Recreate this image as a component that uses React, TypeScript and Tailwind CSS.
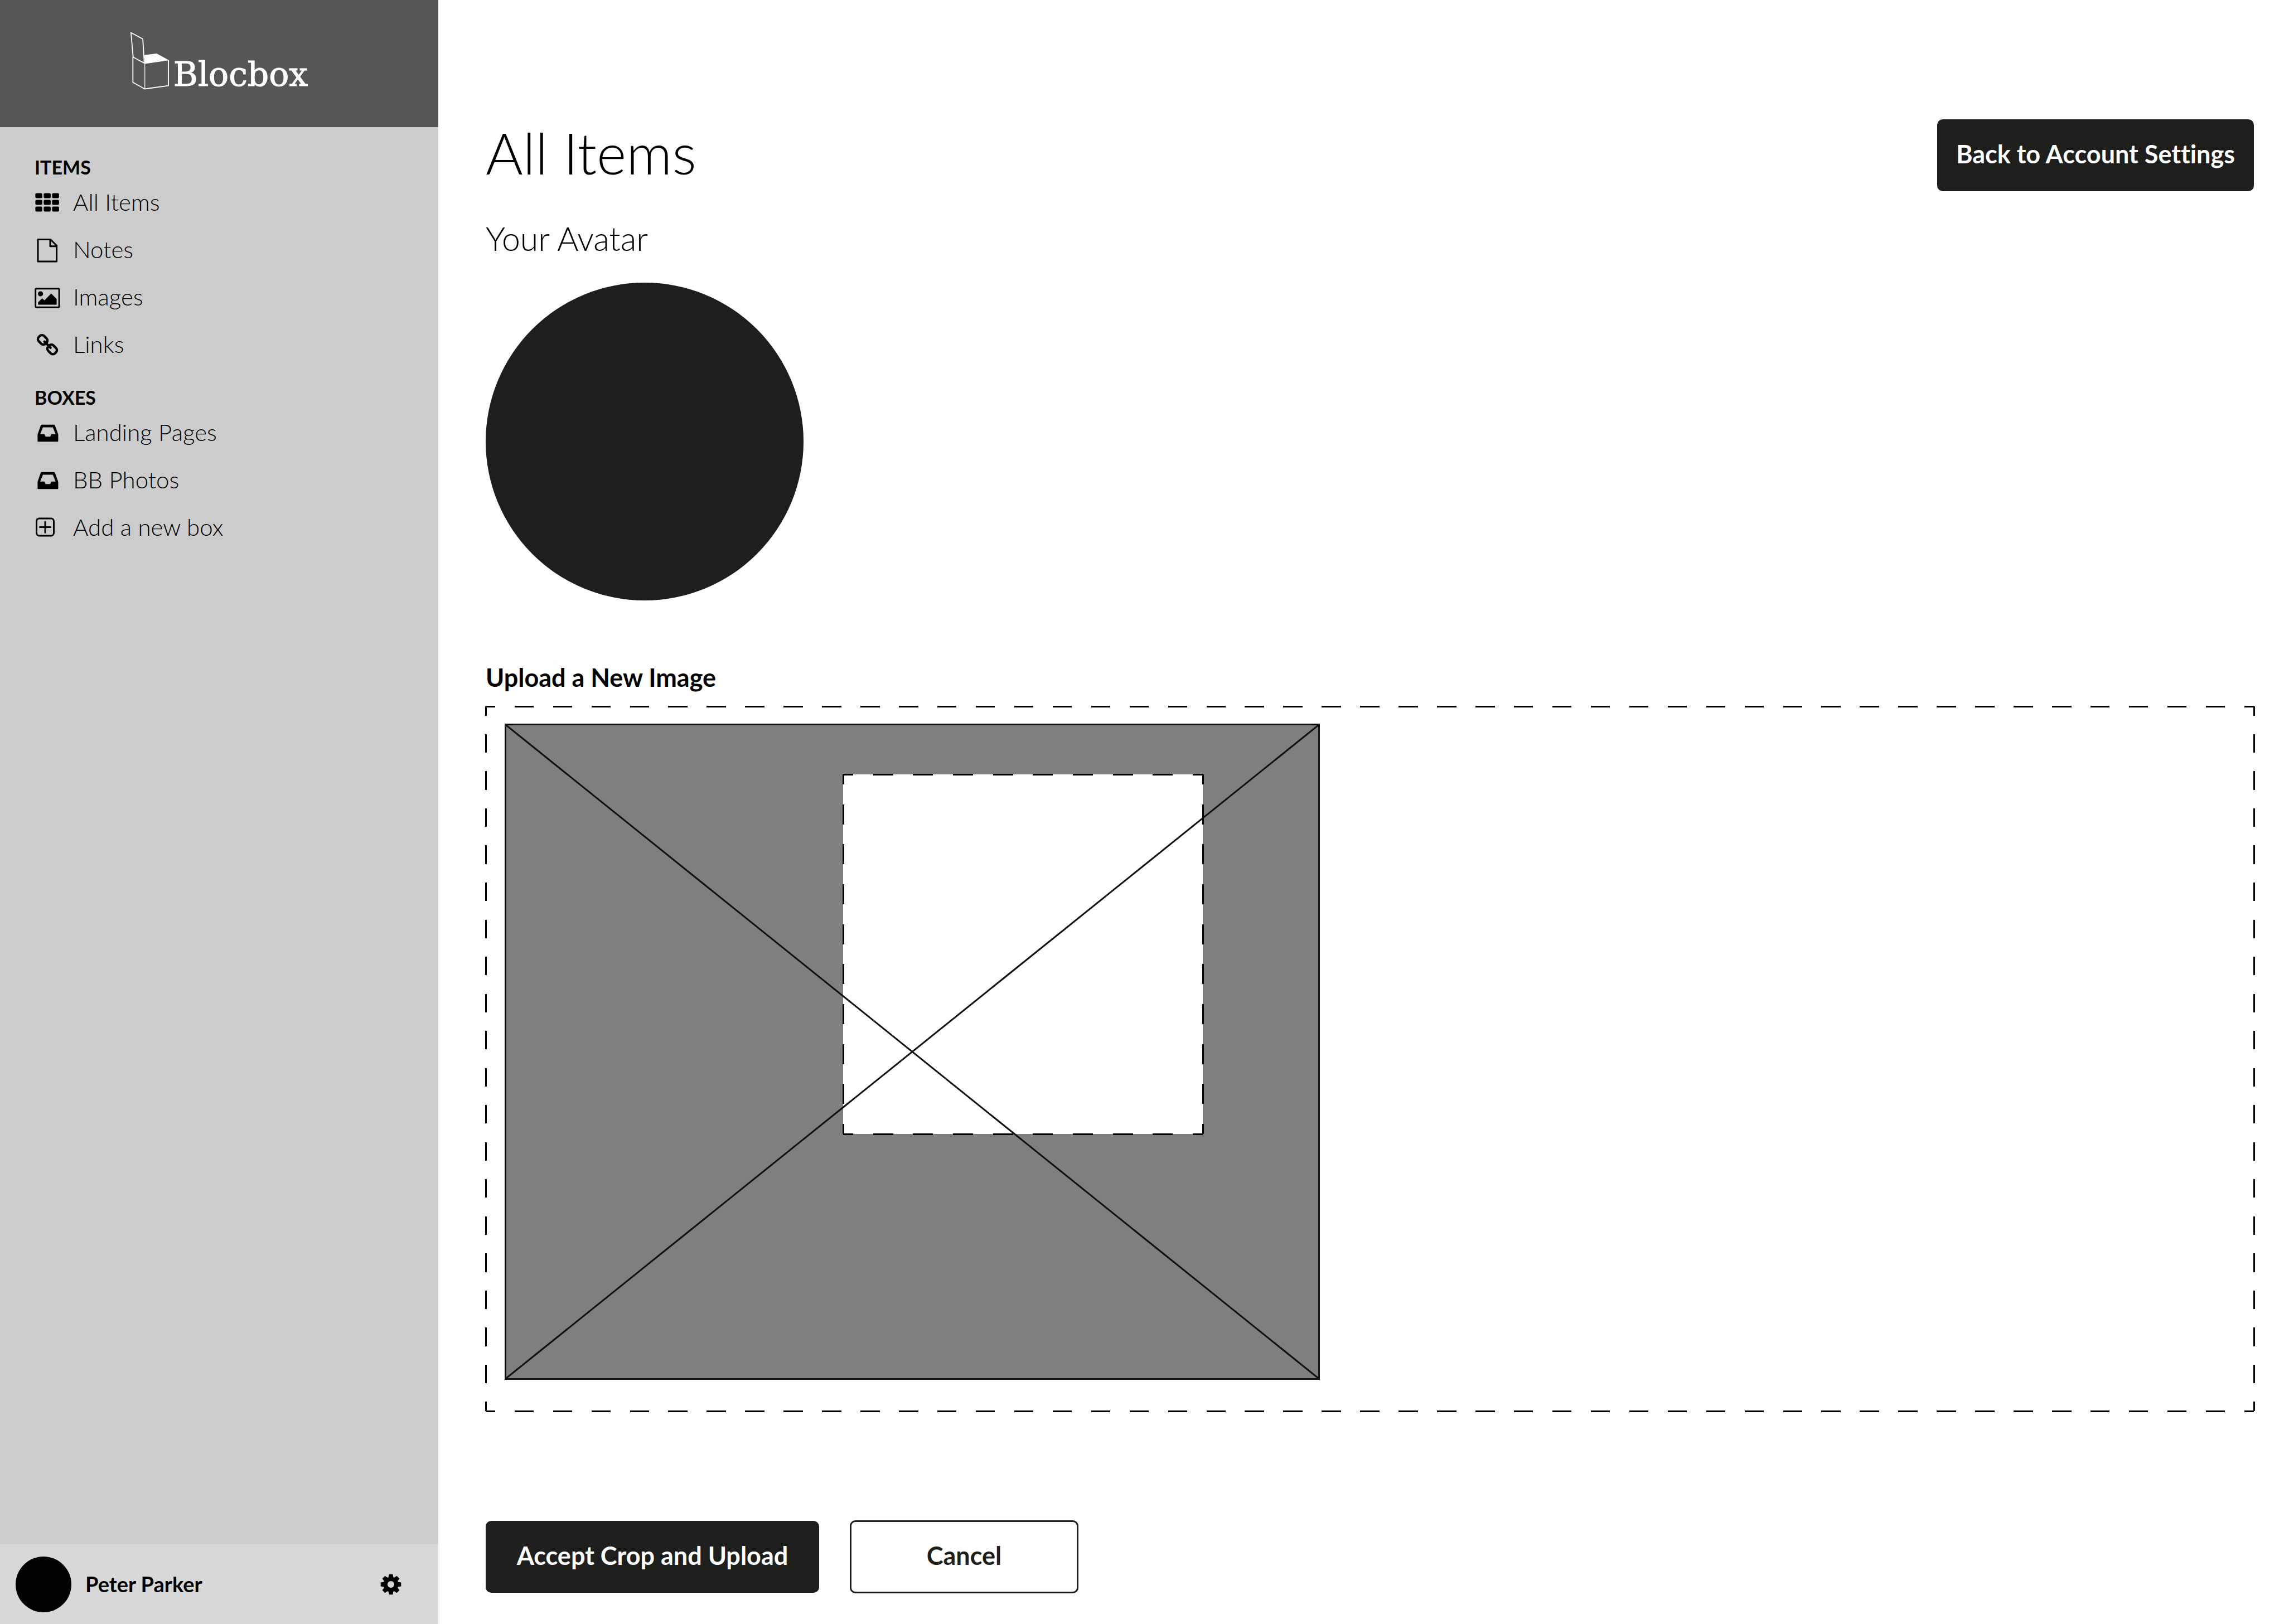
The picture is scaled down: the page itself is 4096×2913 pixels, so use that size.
import React from "react";

type IconProps = { children: React.ReactNode };

function Glyph({ children }: IconProps) {
  return (
    <svg viewBox="0 0 46 46" className="size-[46px] shrink-0" fill="currentColor" aria-hidden="true">
      {children}
    </svg>
  );
}

function GridIcon() {
  const cols = [1, 16, 31];
  const rows = [6, 18, 30];
  return (
    <Glyph>
      {rows.map((y) => cols.map((x) => <rect key={`${x}-${y}`} x={x + 0.4} y={y + 0.4} width="12.5" height="9" rx="2.2" />))}
    </Glyph>
  );
}

function NoteIcon() {
  return (
    <Glyph>
      <path d="M6 4.5H28.5L39.6 15.5V44H6Z M28 4.5V16.8H39.6" fill="none" stroke="currentColor" strokeWidth="3" strokeLinejoin="round" />
    </Glyph>
  );
}

function ImageIcon() {
  return (
    <Glyph>
      <rect x="1.7" y="7.8" width="42.4" height="33.4" rx="1.6" fill="none" stroke="currentColor" strokeWidth="2.9" />
      <circle cx="10.6" cy="17" r="4.6" />
      <path d="M6.3 36.5V32.3L13.6 25L17.6 28.8L29.8 16.5L39.6 26.3V36.5Z" />
    </Glyph>
  );
}

function LinkIcon() {
  return (
    <Glyph>
      <g fill="none" stroke="currentColor" strokeWidth="4.4" strokeLinecap="round">
        <rect x="6" y="7.9" width="17" height="13.4" rx="5.4" transform="rotate(45 14.5 14.6)" />
        <rect x="23" y="25.1" width="17" height="13.4" rx="5.4" transform="rotate(45 31.5 31.8)" />
        <path d="M17.8 17.8L28.6 28.6" />
      </g>
    </Glyph>
  );
}

function TrayIcon() {
  return (
    <Glyph>
      <path
        fillRule="evenodd"
        d="M13 8.8H34.5Q36 8.8 36.6 10.2L42 25Q42.4 26 42.4 27.5V38Q42.4 39.3 41 39.3H6.8Q5.4 39.3 5.4 38V27.5Q5.4 26 5.8 25L11 10.2Q11.6 8.8 13 8.8Z M15 13.5L10 25.7H17.6L19.8 30.3H28L30.2 25.7H37.7L32.7 13.5Z"
      />
    </Glyph>
  );
}

function PlusBoxIcon() {
  return (
    <Glyph>
      <g fill="none" stroke="currentColor" strokeWidth="3">
        <rect x="3.5" y="6.9" width="31" height="31" rx="5" />
        <path d="M19 12.8V32.2M9.3 22.4H28.7" strokeLinecap="round" />
      </g>
    </Glyph>
  );
}

function GearIcon() {
  const teeth = [0, 45, 90, 135, 180, 225, 270, 315];
  return (
    <svg viewBox="-19 -19 38 38" className="size-[38px]" fill="currentColor" aria-hidden="true">
      <circle r="9.8" fill="none" stroke="currentColor" strokeWidth="7.4" />
      {teeth.map((a) => (
        <path key={a} d="M-4.5 -12L-3.4 -18.3H3.4L4.5 -12Z" transform={`rotate(${a})`} />
      ))}
    </svg>
  );
}

function LogoMark() {
  return (
    <svg viewBox="0 0 303 455" className="h-[104px] w-[69px]" fill="none" stroke="white" aria-hidden="true">
      <path d="M110 183L206 170L299 221L112 249Z" fill="white" stroke="none" />
      <path d="M4 6L97 56L109 246L21 199Z" strokeWidth="8" />
      <path d="M19 198V398L112 449L299 424V222" strokeWidth="8" />
      <path d="M113 449V249L299 222" strokeWidth="5" />
    </svg>
  );
}

type FrameProps = { perRow: number; perColumn: number };

/* Dashed frame whose corners always fall in the middle of a dash. */
function DashedFrame({ perRow, perColumn }: FrameProps) {
  const row = { pathLength: perRow * 2, strokeDasharray: "1 1", strokeDashoffset: 0.5 };
  const column = { pathLength: perColumn * 2, strokeDasharray: "1 1", strokeDashoffset: 0.5 };
  return (
    <svg
      className="pointer-events-none absolute inset-0 size-full overflow-visible"
      stroke="black"
      strokeWidth="3"
      shapeRendering="crispEdges"
      aria-hidden="true"
    >
      <line x1="0" y1="0" x2="100%" y2="0" {...row} />
      <line x1="0" y1="100%" x2="100%" y2="100%" {...row} />
      <line x1="0" y1="0" x2="0" y2="100%" {...column} />
      <line x1="100%" y1="0" x2="100%" y2="100%" {...column} />
    </svg>
  );
}

type Entry = { label: string; icon: React.ReactNode };

const items: Entry[] = [
  { label: "All Items", icon: <GridIcon /> },
  { label: "Notes", icon: <NoteIcon /> },
  { label: "Images", icon: <ImageIcon /> },
  { label: "Links", icon: <LinkIcon /> },
];

const boxes: Entry[] = [
  { label: "Landing Pages", icon: <TrayIcon /> },
  { label: "BB Photos", icon: <TrayIcon /> },
  { label: "Add a new box", icon: <PlusBoxIcon /> },
];

function NavGroup({ title, entries }: { title: string; entries: Entry[] }) {
  return (
    <section>
      <h2 className="text-[34px] leading-[40px] font-bold">{title}</h2>
      <ul>
        {entries.map((e) => (
          <li key={e.label}>
            <a href="#" className="flex items-center gap-[23px] text-[42px] leading-[85px] font-light">
              {e.icon}
              {e.label}
            </a>
          </li>
        ))}
      </ul>
    </section>
  );
}

function Sidebar() {
  return (
    <aside className="flex w-[786px] shrink-0 flex-col bg-[#cccccc]">
      <header className="flex h-[228px] items-start justify-center bg-[#565656] pt-[57px]">
        <a href="#" className="flex items-start gap-2 text-white">
          <LogoMark />
          <span className="pt-[41px] font-['DejaVu_Serif',serif] text-[60px] leading-[70px] [-webkit-text-stroke:1px_white]">Blocbox</span>
        </a>
      </header>
      <nav className="flex grow flex-col gap-[33px] pt-[52px] pl-[62px]">
        <NavGroup title="ITEMS" entries={items} />
        <NavGroup title="BOXES" entries={boxes} />
      </nav>
      <footer className="flex h-[143px] items-center bg-[#d8d8d8] pr-[66px] pl-7">
        <div className="size-[100px] rounded-full bg-black" />
        <span className="ml-[25px] text-[38px] font-bold">Peter Parker</span>
        <button type="button" aria-label="Settings" className="ml-auto">
          <GearIcon />
        </button>
      </footer>
    </aside>
  );
}

function CropPreview() {
  return (
    <div className="relative h-[1177px] w-[1462px] border-[3px] border-[#111110] bg-[#7f7f7f]">
      <div className="absolute top-[88px] left-[604px] size-[645px] bg-white">
        <DashedFrame perRow={9} perColumn={9} />
      </div>
      <svg className="absolute inset-0 size-full" stroke="#111110" strokeWidth="3" aria-hidden="true">
        <line x1="0" y1="0" x2="100%" y2="100%" />
        <line x1="0" y1="100%" x2="100%" y2="0" />
      </svg>
    </div>
  );
}

export default function App() {
  return (
    <div className="flex min-h-screen bg-white font-['Lato',sans-serif] text-black [font-variant-ligatures:none]">
      <Sidebar />
      <main className="flex grow flex-col pt-[214px] pr-[54px] pl-[85px]">
        <div className="flex items-start justify-between">
          <h1 className="text-[102px] leading-[120px] font-light">All Items</h1>
          <button type="button" className="h-[129px] w-[568px] rounded-[10px] bg-[#1e1e1c] pb-1 text-[45px] font-bold text-white">
            Back to Account Settings
          </button>
        </div>
        <h2 className="mt-[50px] text-[59px] leading-[70px] font-light">Your Avatar</h2>
        <div className="mt-[44px] size-[570px] rounded-full bg-[#1e1e1c]" />
        <h3 className="mt-[108px] text-[45px] leading-[60px] font-bold">Upload a New Image</h3>
        <div className="relative mt-[22px] px-[34px] pt-[31px] pb-[56px]">
          <DashedFrame perRow={46} perColumn={19} />
          <CropPreview />
        </div>
        <div className="mt-[196px] flex items-center gap-[55px]">
          <button type="button" className="h-[129px] w-[598px] rounded-[10px] bg-[#1e1e1c] pb-1 text-[45px] font-bold text-white">
            Accept Crop and Upload
          </button>
          <button type="button" className="h-[131px] w-[410px] rounded-[10px] border-[3px] border-[#1e1e1c] bg-white pb-1 text-[45px] font-bold text-[#1e1e1c]">
            Cancel
          </button>
        </div>
      </main>
    </div>
  );
}
